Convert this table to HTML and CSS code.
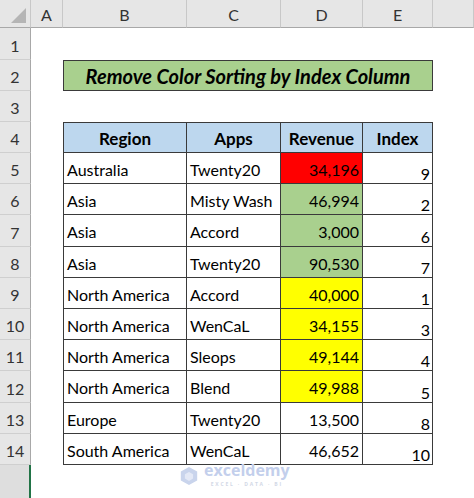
FILE: index.html
```html
<!DOCTYPE html>
<html>
<head>
<meta charset="utf-8">
<link rel="stylesheet" href="styles.css">
</head>
<body>
<div class="sheet">
  <div class="colheads">
    <div class="corner"><span class="tri"></span></div>
    <div class="ch w-a">A</div>
    <div class="ch w-b">B</div>
    <div class="ch w-c">C</div>
    <div class="ch w-d">D</div>
    <div class="ch w-e">E</div>
    <div class="ch w-f"></div>
  </div>
  <div class="body">
    <div class="rowheads">
      <div class="rh h32">1</div>
      <div class="rh">2</div>
      <div class="rh">3</div>
      <div class="rh">4</div>
      <div class="rh">5</div>
      <div class="rh">6</div>
      <div class="rh h32">7</div>
      <div class="rh">8</div>
      <div class="rh">9</div>
      <div class="rh">10</div>
      <div class="rh">11</div>
      <div class="rh h32">12</div>
      <div class="rh">13</div>
      <div class="rh">14</div>
      <div class="rh filler"></div>
    </div>
    <div class="cells">
      <div class="title">Remove Color Sorting by Index Column</div>
      <div class="table">
        <div class="c hd first">Region</div>
        <div class="c hd">Apps</div>
        <div class="c hd">Revenue</div>
        <div class="c hd">Index</div>

        <div class="c txt first">Australia</div>
        <div class="c txt">Twenty20</div>
        <div class="c num red">34,196</div>
        <div class="c idx">9</div>

        <div class="c txt first">Asia</div>
        <div class="c txt">Misty Wash</div>
        <div class="c num green">46,994</div>
        <div class="c idx">2</div>

        <div class="c txt first">Asia</div>
        <div class="c txt">Accord</div>
        <div class="c num green">3,000</div>
        <div class="c idx">6</div>

        <div class="c txt first">Asia</div>
        <div class="c txt">Twenty20</div>
        <div class="c num green">90,530</div>
        <div class="c idx">7</div>

        <div class="c txt first">North America</div>
        <div class="c txt">Accord</div>
        <div class="c num yellow">40,000</div>
        <div class="c idx">1</div>

        <div class="c txt first">North America</div>
        <div class="c txt">WenCaL</div>
        <div class="c num yellow">34,155</div>
        <div class="c idx">3</div>

        <div class="c txt first">North America</div>
        <div class="c txt">Sleops</div>
        <div class="c num yellow">49,144</div>
        <div class="c idx">4</div>

        <div class="c txt first">North America</div>
        <div class="c txt">Blend</div>
        <div class="c num yellow">49,988</div>
        <div class="c idx">5</div>

        <div class="c txt first">Europe</div>
        <div class="c txt">Twenty20</div>
        <div class="c num">13,500</div>
        <div class="c idx">8</div>

        <div class="c txt first">South America</div>
        <div class="c txt">WenCaL</div>
        <div class="c num">46,652</div>
        <div class="c idx">10</div>
      </div>
      <div class="watermark">
        <svg class="wm-logo" width="18" height="20" viewBox="0 0 22 24">
          <path d="M11 1 L21 6.5 L21 17.5 L11 23 L1 17.5 L1 6.5 Z" fill="#c9d4ec"/>
          <path d="M11 7 L16 10 L16 15 L11 18 L6 15 L6 10 Z" fill="#e4e9f6"/>
        </svg>
        <div class="wm-text">
          <div class="wm-name">exceldemy</div>
          <div class="wm-sub">EXCEL · DATA · BI</div>
        </div>
      </div>
    </div>
  </div>
</div>
</body>
</html>
```

FILE: styles.css
```css
* { box-sizing: border-box; }
html, body { margin: 0; padding: 0; background: #fff; }
body {
  width: 474px;
  height: 498px;
  overflow: hidden;
  font-family: Lato, "Open Sans", sans-serif;
  color: #000;
}
.sheet { display: flex; flex-direction: column; }

.colheads { display: flex; height: 28px; }
.corner {
  width: 31px;
  height: 28px;
  background: #e6e6e6;
  border-right: 1px solid #c8c8c8;
  border-bottom: 1px solid #a8a8a8;
  position: relative;
}
.tri {
  position: absolute;
  right: 4px;
  bottom: 4px;
  width: 0;
  height: 0;
  border-left: 15px solid transparent;
  border-bottom: 15px solid #b5b5b5;
}
.ch {
  height: 28px;
  background: #e6e6e6;
  border-right: 1px solid #c8c8c8;
  border-bottom: 1px solid #a8a8a8;
  display: flex;
  align-items: center;
  justify-content: center;
  font-family: Lato, sans-serif;
  font-size: 16px;
  color: #333;
  padding-top: 2px;
}
.w-a { width: 32px; }
.w-b { width: 124px; }
.w-c { width: 94px; }
.w-d { width: 82px; }
.w-e { width: 70px; }
.w-f { width: 41px; }

.body { display: flex; }
.rowheads { display: flex; flex-direction: column; width: 31px; }
.rh {
  height: 31px;
  background: #e6e6e6;
  border-right: 1px solid #a8a8a8;
  border-bottom: 1px solid #cfcfcf;
  display: flex;
  align-items: center;
  justify-content: center;
  font-size: 16px;
  color: #333;
  padding-top: 3px;
}
.rh.h32 { height: 32px; }
.rh.filler {
  height: 40px;
  background: #dedede;
  border-bottom: none;
  border-right: 2px solid #217346;
}

.cells {
  position: relative;
  display: grid;
  grid-template-columns: 32px 370px 41px;
  grid-template-rows: 32px 31px 31px auto;
  align-content: start;
}
.title {
  grid-column: 2;
  grid-row: 2;
  background: #a9d08e;
  border: 1px solid #3a3a3a;
  display: flex;
  align-items: center;
  justify-content: center;
  font-weight: bold;
  font-style: italic;
  font-size: 20px;
  padding-top: 1px;
  white-space: nowrap;
}
.table {
  grid-column: 2;
  grid-row: 4;
  display: grid;
  grid-template-columns: 124px 94px 82px 70px;
  grid-template-rows: 31px 31px 31px 32px 31px 31px 31px 31px 32px 31px 31px;
}
.c {
  border-right: 1px solid #3a3a3a;
  border-bottom: 1px solid #3a3a3a;
  font-size: 16px;
  display: flex;
  align-items: center;
  white-space: nowrap;
  padding-top: 2px;
}
.c.first { border-left: 1px solid #3a3a3a; }
.hd {
  background: #bdd7ee;
  border-top: 1px solid #3a3a3a;
  font-weight: bold;
  font-size: 17px;
  justify-content: center;
}
.txt { padding-left: 3px; }
.num { justify-content: flex-end; padding-right: 3px; }
.idx { justify-content: flex-end; align-items: flex-end; padding-right: 2px; padding-bottom: 0; }
.red { background: #ff0000; }
.green { background: #a9d08e; }
.yellow { background: #ffff00; }

.watermark {
  position: absolute;
  left: 149px;
  top: 434px;
  display: flex;
  align-items: flex-start;
  gap: 6px;
}
.wm-logo { margin-top: 4px; }
.wm-text { display: flex; flex-direction: column; align-items: center; }
.wm-name {
  font-family: "Open Sans", sans-serif;
  font-weight: bold;
  font-size: 16px;
  line-height: 16px;
  color: #c3cfec;
}
.wm-sub {
  font-family: "Open Sans", sans-serif;
  font-size: 5px;
  font-weight: bold;
  letter-spacing: 1.8px;
  color: #d2d8e6;
  line-height: 6px;
  margin-top: 3px;
}
```
